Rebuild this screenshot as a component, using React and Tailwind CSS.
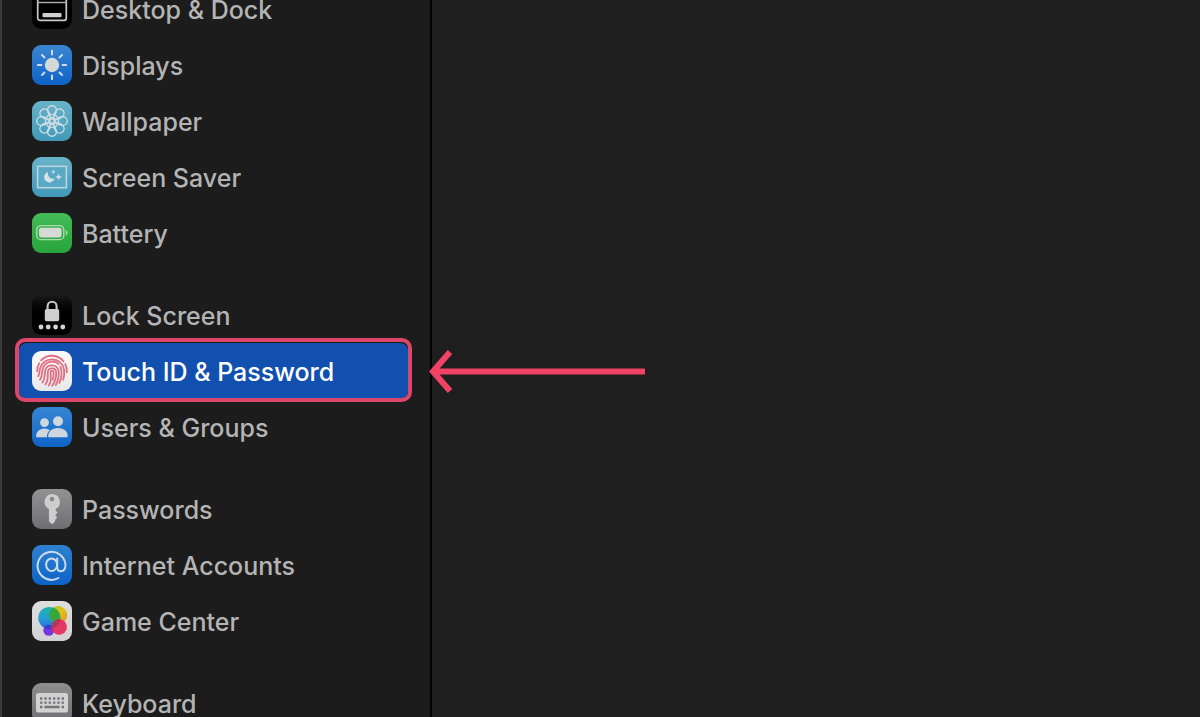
import React, { useState } from "react";

function Tile({ className, children }) {
  return (
    <svg viewBox="0 0 40 40" aria-hidden="true" className={"size-10 shrink-0 rounded-[9px] " + className}>
      {children}
    </svg>
  );
}

function DockIcon() {
  return (
    <Tile className="bg-black">
      <rect x="5.7" y="7" width="28.6" height="24.4" rx="2.5" fill="none" stroke="#c9c9c9" strokeWidth="1.7" />
      <path d="M5.7 13.6h28.6" stroke="#a9a9a9" strokeWidth="1.5" />
      <rect x="10.5" y="24" width="19" height="4.2" rx="1" fill="#d0d0d0" />
    </Tile>
  );
}

const rays = [0, 45, 90, 135, 180, 225, 270, 315];

function DisplaysIcon() {
  return (
    <Tile className="bg-linear-to-b from-[#3a86d0] to-[#0b62c8]">
      <circle cx="20" cy="20" r="7.2" fill="#d5d9d8" />
      {rays.map((a) => (
        <path key={a} d="M20 5.8v3.6" transform={`rotate(${a} 20 20)`} stroke="#d0dbe4" strokeWidth="2" strokeLinecap="round" />
      ))}
    </Tile>
  );
}

function WallpaperIcon() {
  return (
    <Tile className="bg-linear-to-b from-[#68b3c9] to-[#4198b8]">
      <g fill="none" stroke="#cbdde2" strokeWidth="1.4">
        {rays.map((a) => (
          <g key={a} transform={`rotate(${a} 20 20)`}>
            <circle cx="20" cy="9.2" r="4.4" />
            <path d="M15.8 10.500C16.200 13.500 18 15.500 20 17.500C22 15.500 23.800 13.500 24.200 10.500" />
          </g>
        ))}
        <circle cx="20" cy="20" r="2.3" />
      </g>
    </Tile>
  );
}

function ScreenSaverIcon() {
  return (
    <Tile className="bg-linear-to-b from-[#68b3c9] to-[#4198b8]">
      <rect x="5.6" y="9.3" width="28.8" height="21.4" fill="#59a9c6" stroke="#b9d6dc" strokeWidth="1.6" />
      <path d="M16 15a5.300 5.300 0 1 0 6.500 6.500A5.300 5.300 0 0 1 16 15Z" fill="#d3e2e5" />
      <path d="M21.3 12.5l.7 1.7 1.7.7-1.7.7-.7 1.7-.7-1.7-1.700-.7 1.700-.7zM26.600 16.500l.9 2.600 2.600.9-2.600.9-.9 2.600-.9-2.600-2.600-.9 2.600-.9z" fill="#d3e2e5" />
    </Tile>
  );
}

function BatteryIcon() {
  return (
    <Tile className="bg-linear-to-b from-[#44bb58] to-[#26a53b]">
      <rect x="4.8" y="12.6" width="27" height="14" rx="4.2" fill="none" stroke="#a9dcae" strokeWidth="1.4" />
      <rect x="7" y="14.8" width="22.6" height="9.6" rx="2.3" fill="#d5dbd4" />
      <path d="M33.8 17v5.400c2.300-.8 2.300-4.600 0-5.400z" fill="#a9dcae" />
    </Tile>
  );
}

function LockIcon() {
  return (
    <Tile className="bg-linear-to-b from-[#1b1b1b] to-black to-60%">
      <path d="M15.6 15.500v-4.300a4.500 4.500 0 0 1 9 0v4.300" fill="none" stroke="#c8c8c8" strokeWidth="2.1" />
      <rect x="12.8" y="14" width="14.4" height="12.2" rx="1.8" fill="#cfcfcf" />
      {[9, 16.2, 23.6, 30.8].map((x) => (
        <circle key={x} cx={x} cy="32" r="2.4" fill="#d4d4d4" />
      ))}
    </Tile>
  );
}

function TouchIdIcon() {
  return (
    <Tile className="bg-linear-to-b from-[#fafafa] to-[#e9e9ec]">
      <g fill="none" stroke="#e06f82" strokeWidth="1.8" strokeLinecap="round">
        <path d="M9 9.4A15 15 0 0 1 31.6 10.4" />
        <path d="M5.2 20.400A15 15 0 0 1 7.2 12.2M33.2 13A15 15 0 0 1 34.8 21.4" />
        <path d="M6.2 25.2C7.8 22.6 7.3 20.6 8 17.6A12.3 12.3 0 0 1 32 18.2C32.6 22 32.3 25.4 31.2 28.800" />
        <path d="M8 28.7C10.8 25 9.7 21.7 10.7 18.3A9.6 9.6 0 0 1 26.7 13.2M28.4 15.6C30.3 20.6 29.6 26.8 27.4 32" />
        <path d="M10.4 31.5C14 26.6 12.3 22.7 13.3 19.2A6.9 6.9 0 0 1 26.6 19.8C27.2 24.8 26 29.8 23.8 34.2" />
        <path d="M13.4 33.4C17 28.6 15.4 24.4 15.9 20.7A4.2 4.2 0 0 1 24.2 21C24.4 26 23 31 20.2 34.8" />
        <path d="M16.8 34.5C20.2 30.2 18.4 25 18.6 21.3A1.5 1.5 0 0 1 21.6 21.3C21.8 24 21.5 26.4 20.8 28.6" />
      </g>
    </Tile>
  );
}

function UsersIcon() {
  return (
    <Tile className="bg-linear-to-b from-[#3586d2] to-[#0e64c6]">
      <g fill="#cfd7de">
        <circle cx="12.5" cy="15.6" r="4.4" />
        <path d="M4.2 30.3C3.6 25.3 7.5 21.5 12.5 21.5c2.1 0 3.9.7 5.2 1.8C15.7 25.1 14.8 27.6 15 30.3z" />
        <circle cx="26" cy="14.3" r="5" />
        <path d="M16.3 30.3c-.8-5.7 3.6-9.4 9.7-9.4s10.300 3.700 9.600 9.400z" />
      </g>
    </Tile>
  );
}

function KeyIcon() {
  return (
    <Tile className="bg-linear-to-b from-[#929295] to-[#6f6f73]">
      <path
        fillRule="evenodd"
        fill="#cecece"
        d="M20 5a7.900 7.900 0 0 1 3.800 14.800V21.500l1.800 2-2.400 2.700 2 2.200-2.100 2.500v1.700L20.300 35.300l-3.400-2.700V19.900A7.900 7.900 0 0 1 20 5zM20 7.800a2.300 2.300 0 1 0 0 4.600 2.300 2.300 0 0 0 0-4.600z"
      />
    </Tile>
  );
}

function AtIcon() {
  return (
    <Tile className="bg-linear-to-b from-[#2f81d0] to-[#0b62c6]">
      <g fill="none" stroke="#cddbe8" strokeWidth="2" strokeLinecap="round">
        <path d="M26.500 33A14 14 0 1 1 33.500 19.600C33.500 23.800 32 26.200 29 26.200C26.500 26.200 25.200 24.600 25.200 22.200V13.600" />
        <ellipse cx="19.600" cy="19.700" rx="5.500" ry="6.300" />
      </g>
    </Tile>
  );
}

function GameCenterIcon() {
  return (
    <Tile className="bg-linear-to-b from-[#dedede] to-[#d2d2d4]">
      <defs>
        <linearGradient id="bubble-blue" x1="0" y1="0" x2="0" y2="1">
          <stop offset="0" stopColor="#20b5a8" />
          <stop offset="0.5" stopColor="#249fd3" />
          <stop offset="1" stopColor="#2d67d8" />
        </linearGradient>
        <linearGradient id="bubble-yellow" x1="0" y1="0" x2="1" y2="1">
          <stop offset="0" stopColor="#9fc229" />
          <stop offset="0.5" stopColor="#e0c21c" />
          <stop offset="1" stopColor="#e78a25" />
        </linearGradient>
        <clipPath id="bubble-clip">
          <circle cx="17.3" cy="16.9" r="11" />
        </clipPath>
      </defs>
      <circle cx="26.2" cy="14" r="9" fill="url(#bubble-yellow)" />
      <circle cx="16.8" cy="29.300" r="5.5" fill="#7636df" />
      <circle cx="17.3" cy="16.9" r="11" fill="url(#bubble-blue)" />
      <circle cx="26.2" cy="14" r="9" fill="#39a83b" clipPath="url(#bubble-clip)" />
      <circle cx="16.8" cy="29.300" r="5.5" fill="#3c3bc6" clipPath="url(#bubble-clip)" />
      <circle cx="27.2" cy="26" r="7.7" fill="#e52c5c" fillOpacity="0.93" />
      <circle cx="27.2" cy="26" r="7.7" fill="#b0385c" clipPath="url(#bubble-clip)" />
    </Tile>
  );
}

function KeyboardIcon() {
  return (
    <Tile className="bg-linear-to-b from-[#8f8f92] to-[#6f6f73]">
      <rect x="4" y="10" width="32" height="19.5" rx="2.6" fill="#d2d2d2" />
      <g stroke="#77777a" strokeWidth="2.3">
        <path d="M8 15.5h24" strokeDasharray="2.4 1.92" />
        <path d="M8 19.700h24" strokeDasharray="2.4 1.92" />
        <path d="M8 24h2.4M12.4 24h15.2M29.6 24H32" />
      </g>
    </Tile>
  );
}

const groups = [
  [
    { name: "Desktop & Dock", Icon: DockIcon },
    { name: "Displays", Icon: DisplaysIcon },
    { name: "Wallpaper", Icon: WallpaperIcon },
    { name: "Screen Saver", Icon: ScreenSaverIcon },
    { name: "Battery", Icon: BatteryIcon },
  ],
  [
    { name: "Lock Screen", Icon: LockIcon },
    { name: "Touch ID & Password", Icon: TouchIdIcon },
    { name: "Users & Groups", Icon: UsersIcon },
  ],
  [
    { name: "Passwords", Icon: KeyIcon },
    { name: "Internet Accounts", Icon: AtIcon },
    { name: "Game Center", Icon: GameCenterIcon },
  ],
  [{ name: "Keyboard", Icon: KeyboardIcon }],
];

// Outline and arrow that point at the Touch ID row
function Callout() {
  return (
    <>
      <span className="pointer-events-none absolute -inset-x-1 -top-[5px] -bottom-[3px] rounded-[10px] border-4 border-[#dc4668]" />
      <svg viewBox="0 0 218 44" aria-hidden="true" className="pointer-events-none absolute top-1.5 left-full ml-5 h-11 w-[218px]">
        <path d="M217 22.500H5M22 3L5 22.500L22 42" fill="none" stroke="#f04264" strokeWidth="6" />
      </svg>
    </>
  );
}

export default function App() {
  const [selected, setSelected] = useState("Touch ID & Password");

  return (
    <div className="flex h-screen overflow-hidden bg-[#1e1e1e] font-['Inter',sans-serif]">
      <nav aria-label="Settings" className="w-[432px] shrink-0 border-r-2 border-l-2 border-r-black border-l-[#3b3b3b] bg-[#1c1c1c]">
        <div className="-mt-[19px] flex flex-col gap-[26px] pr-[22px] pl-[17px]">
          {groups.map((items) => (
            <ul key={items[0].name}>
              {items.map(({ name, Icon }) => (
                <li key={name} className="relative">
                  <button
                    type="button"
                    onClick={() => setSelected(name)}
                    className={
                      "flex h-14 w-full items-center gap-[10px] rounded-lg px-[13px] text-left text-[25px] leading-8 font-medium " +
                      (selected === name ? "bg-[#1250af] text-white" : "text-[#b4b4b4]")
                    }
                  >
                    <Icon />
                    <span className="pt-0.5 whitespace-nowrap">{name}</span>
                  </button>
                  {name === "Touch ID & Password" && <Callout />}
                </li>
              ))}
            </ul>
          ))}
        </div>
      </nav>
      <main className="flex-1" />
    </div>
  );
}
